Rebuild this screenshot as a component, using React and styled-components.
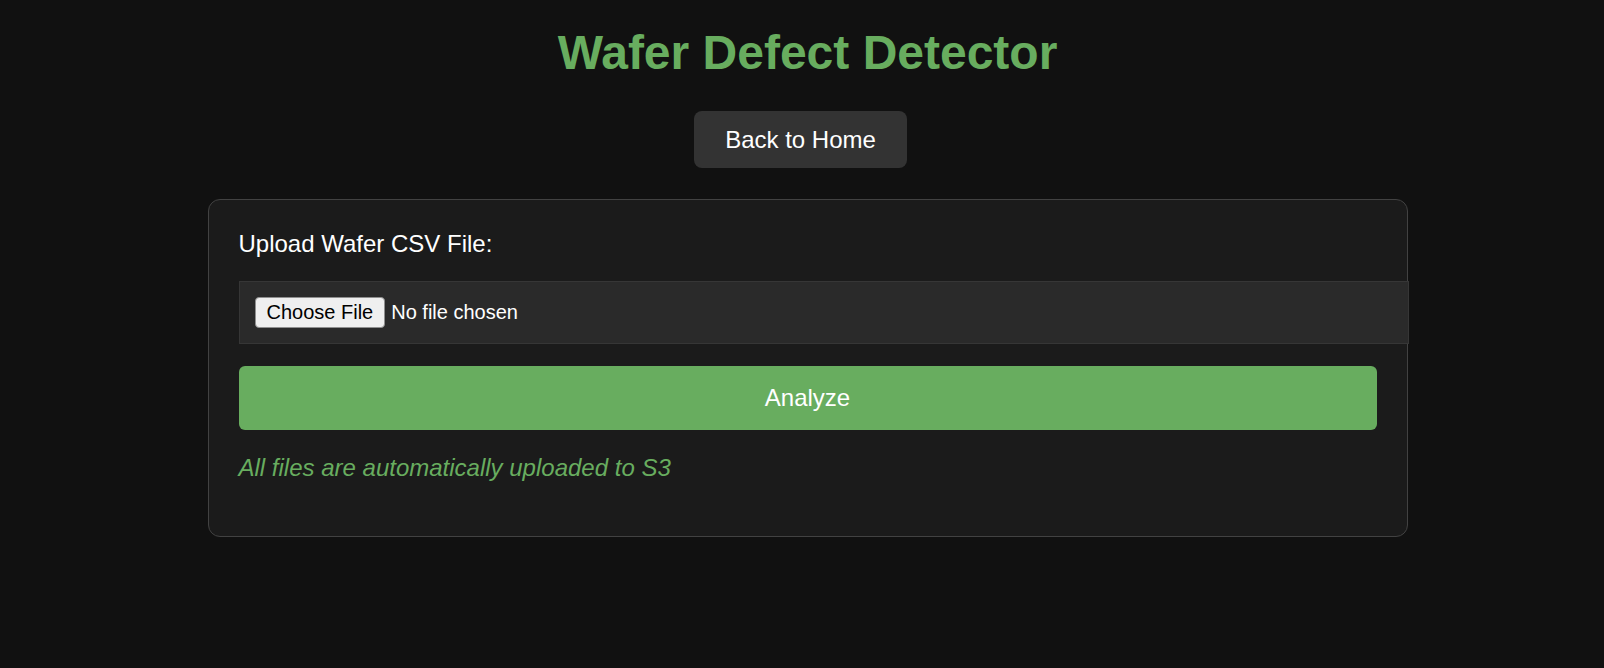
import React from 'react'
import styled, { createGlobalStyle } from 'styled-components'

const GlobalStyle = createGlobalStyle`
  html, body {
    margin: 0;
    padding: 0;
    background-color: #111111;
  }
  body {
    font-family: "Liberation Sans", Arial, sans-serif;
    color: #ffffff;
  }
`;

const Page = styled.div`
  min-height: 100vh;
  padding-left: 11px;
  display: flex;
  flex-direction: column;
  align-items: center;
`;

const Title = styled.h1`
  margin: 25px 0 31px;
  font-size: 48px;
  font-weight: bold;
  color: #68ad5f;
  line-height: normal;
`;

const BackButton = styled.button`
  height: 57px;
  padding: 0 31px;
  margin: 0 14px 31px 0;
  border: none;
  border-radius: 8px;
  background-color: #333333;
  color: #ffffff;
  font-family: inherit;
  font-size: 24px;
  cursor: pointer;

  &:hover {
    background-color: #3d3d3d;
  }
`;

const Card = styled.div`
  box-sizing: border-box;
  width: 1200px;
  padding: 30px;
  background-color: #1b1b1b;
  border: 1px solid #424242;
  border-radius: 12px;
`;

const Label = styled.label`
  display: block;
  font-size: 24px;
  line-height: normal;
  margin-bottom: 23px;
`;

const FileInput = styled.input`
  display: block;
  width: 100%;
  padding: 15px;
  margin: 0 0 22px;
  background-color: #2a2a2a;
  border: 1px solid #363636;
  color: #ffffff;
  font-family: inherit;
  font-size: 20px;
  line-height: 31px;

  &::file-selector-button {
    height: 31px;
    padding: 0 11px;
    margin-right: 6px;
    background-color: #efefef;
    border: 1px solid #8f8f8f;
    border-radius: 4px;
    color: #000000;
    font-family: inherit;
    font-size: 20px;
    vertical-align: top;
  }
`;

const AnalyzeButton = styled.button`
  display: block;
  width: 100%;
  height: 64px;
  border: none;
  border-radius: 6px;
  background-color: #68ad5f;
  color: #ffffff;
  font-family: inherit;
  font-size: 24px;
  cursor: pointer;
`;

const Note = styled.p`
  margin: 24px 0;
  font-size: 24px;
  font-style: italic;
  line-height: normal;
  color: #68ad5f;
`;

export default function App() {
  return (
    <>
      <GlobalStyle />
      <Page>
        <Title>Wafer Defect Detector</Title>
        <BackButton>Back to Home</BackButton>
        <Card>
          <Label htmlFor="wafer-file">Upload Wafer CSV File:</Label>
          <FileInput id="wafer-file" type="file" accept=".csv" />
          <AnalyzeButton>Analyze</AnalyzeButton>
          <Note>All files are automatically uploaded to S3</Note>
        </Card>
      </Page>
    </>
  )
}
